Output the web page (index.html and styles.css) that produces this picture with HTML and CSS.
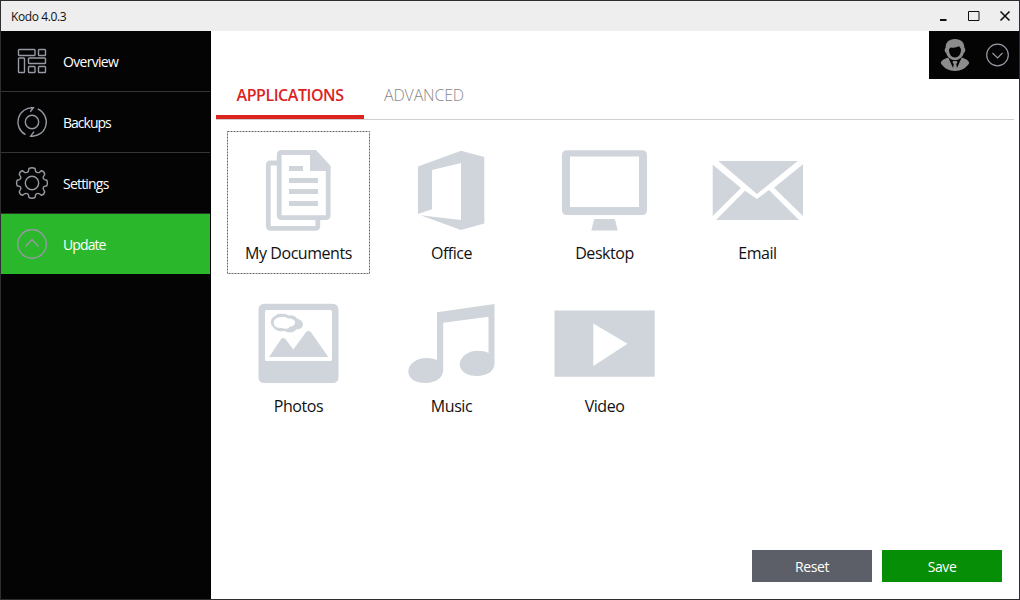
FILE: index.html
```html
<!DOCTYPE html>
<html lang="en">
<head>
<meta charset="utf-8">
<title>Kodo 4.0.3</title>
<link rel="stylesheet" href="styles.css">
</head>
<body>
<div class="window">
  <header class="titlebar">
    <span class="title">Kodo 4.0.3</span>
    <svg class="controls" width="90" height="30" viewBox="929 1 90 30">
      <path class="ctl" d="M940 20h6.500" stroke-width="2"/>
      <path class="ctl" d="M968.500 11.500h10.500v9h-10.500z"/>
      <path class="ctl" d="M1000.500 11.500l9 9M1009.500 11.500l-9 9" stroke-width="1.600"/>
    </svg>
  </header>
  <div class="body">
    <nav class="sidebar">
      <a class="item"><svg class="nav-icon" viewBox="15 45 34 34"><g class="line"><rect x="18.500" y="49.500" width="16.500" height="6" rx=".8"/><rect x="38.500" y="49.500" width="7" height="6" rx=".8"/><rect x="18.500" y="58" width="6" height="14.500" rx=".8"/><rect x="28.500" y="58" width="17" height="5.500" rx=".8"/><rect x="28.500" y="66.500" width="6.500" height="6" rx=".8"/><rect x="38.500" y="66.500" width="7" height="6" rx=".8"/></g></svg><span>Overview</span></a>
      <a class="item backups"><svg class="nav-icon" viewBox="15 106 34 34"><g class="line"><circle cx="32" cy="122" r="6.700"/><path d="M25.500 134.700A14.300 14.300 0 0 1 33.300 107.800L30.300 111.700M37.800 108.900A14.300 14.300 0 0 1 30.700 136.200L34 131.700M33.300 107.800H30.500M30.700 136.200H33.500"/></g></svg><span>Backups</span></a>
      <a class="item settings"><svg class="nav-icon" viewBox="15 167 34 34"><g class="line"><circle cx="32" cy="183" r="6.700"/><path d="M29 168.500Q32 167 35 168.500L35.700 171.500Q37.300 173.300 39.500 172.300L41.300 170.800Q44.500 171.500 44.700 174.500L43.500 176.500Q42.500 178.600 44.500 179.700L46.800 180.200Q48 183 46.800 185.800L44.500 186.400Q42.500 187.400 43.500 189.500L44.700 191.600Q44.500 194.500 41.300 195.300L39.500 193.800Q37.300 192.700 35.700 194.500L35 197.500Q32 199 29 197.500L28.300 194.500Q26.700 192.700 24.500 193.800L22.700 195.300Q19.500 194.500 19.300 191.600L20.500 189.500Q21.500 187.400 19.500 186.400L17.200 185.800Q16 183 17.200 180.200L19.500 179.700Q21.500 178.600 20.500 176.500L19.300 174.500Q19.500 171.500 22.700 170.800L24.500 172.300Q26.700 173.300 28.300 171.500Z"/></g></svg><span>Settings</span></a>
      <a class="item active"><svg class="nav-icon" viewBox="15 228 34 34"><g class="line"><circle cx="32" cy="244" r="14.300"/><path d="M25.500 246.500l6.500-7 6.500 7"/></g></svg><span>Update</span></a>
    </nav>
    <main class="content">
      <div class="account">
        <svg width="90" height="48" viewBox="929 31 90 48">
          <path fill="#8c8c8c" fill-rule="evenodd" d="M955 39c6.300 0 9.500 3.500 9.400 9 1.300.4 1.200 4.400-.5 4.800-1.300 4.800-5 7.400-8.900 7.400s-7.600-2.600-8.900-7.400c-1.700-.4-1.800-4.400-.5-4.800-.1-5.500 3.100-9 9.400-9zM949 49.500c0 5 2.700 8 6 8s6-3 6-8c-.4-2-1.500-2.600-2-3.300-2.300 1.200-5.300 1.800-7.800 1.200-1 .3-1.800.9-2.200 2.100z"/>
          <path fill="#8c8c8c" d="M948.300 57.500l4.700 10.500.8-4-1.300-1.500.7-1.500h3.600l.7 1.500-1.300 1.500.8 4 4.700-10.500c3.700 1.300 6.700 2.400 7.600 5.500-2.700 5-8.600 8-14.300 8s-11.600-3-14.300-8c.9-3.100 3.900-4.200 7.600-5.500z"/>
          <g class="line"><circle cx="997.500" cy="55" r="10.800"/><path d="M992.500 53l5 5 5-5"/></g>
        </svg>
      </div>
      <div class="tabs"><a class="tab current"><span>APPLICATIONS</span></a><a class="tab second"><span>ADVANCED</span></a></div>
      <div class="grid">
        <div class="tile"><svg viewBox="227 131 143 111"><rect class="focus" x="227.500" y="131.500" width="142" height="142"/><path d="M278.500 163H270.500Q268.300 163 268.300 165.500V226Q268.300 228.400 271 228.400H315.500Q317.800 228.400 317.800 226V219" class="thick"/><path d="M311 152.500H282Q279.200 152.500 279.200 155V215Q279.200 217.600 282 217.600H325.500Q328.200 217.600 328.200 215V170" class="thick"/><path d="M310 150H316L330.700 166V171H310zM289 166h14v5h-14zM289 178h29v5h-29zM289 189h29v5h-29zM289 201h29v5h-29z"/></svg><span>My Documents</span></div>
        <div class="tile"><svg viewBox="380 131 143 111"><path d="M418 166.500L461 150.700 484.300 157V223.500L461 230 420.500 215.300 461 220V163L432 170V209.300L418 214z"/></svg><span>Office</span></div>
        <div class="tile"><svg viewBox="533 131 143 111"><path fill-rule="evenodd" d="M567 150.300H642Q647 150.300 647 155.300V210Q647 215 642 215H567Q562 215 562 210V155.300Q562 150.300 567 150.300zM570 156.500V207H639V156.500zM595 219H614Q615 219 615.300 220.500L617.700 230.500H591.300L593.800 220.500Q594 219 595 219z"/></svg><span>Desktop</span></div>
        <div class="tile"><svg viewBox="686 131 143 111"><path d="M718.300 161H797.700L757 194zM712.700 164.700L741 188 712.700 216zM803 164.300L774 187.700 803 216zM716 220L745 190.700 757 199 769 190 799 220z"/></svg><span>Email</span></div>
        <div class="tile"><svg viewBox="227 284 143 111"><path fill-rule="evenodd" d="M264.500 303.700H332.500Q338.500 303.700 338.500 309.700V377Q338.500 383 332.500 383H264.500Q258.500 383 258.500 377V309.700Q258.500 303.700 264.500 303.700zM266.500 310Q265 310 265 311.500V359.500Q265 361 266.500 361H330.500Q332 361 332 359.500V311.500Q332 310 330.500 310z"/><path d="M269 357L281.500 338.500Q283.300 337.500 285 338.500L293.300 349.500 306.500 331.500Q308.500 330.500 310.500 331.500L328.300 357z"/><path fill-rule="evenodd" d="M275 316Q277 313.500 281 313.700Q286 313.500 289 315.500Q294 314.500 297 318.500Q302.500 320 303 324Q303 329 296.500 329.500Q292 334.500 284 331Q276 332 273.500 327.500Q270.700 325.500 270.700 322Q271 317.500 275 316zM278 317.500Q273.700 319 273.700 323Q274 328 281.500 328Q288 330 290 326.800Q296 325.500 295 321.500Q293 318 288.500 318.500Q284 315.500 278 317.500z"/></svg><span>Photos</span></div>
        <div class="tile"><svg viewBox="380 284 143 111"><path d="M437 312.300L494.500 304V364C494.500 371 487 376 477 376C467.500 376 459.800 371.500 459.800 364.500C459.800 357 468 350.700 477.500 350.700C482 350.700 486 351.500 488.500 353V316.700L443.200 322.700V370C443.200 378 435 383 425.500 383C415.500 383 408.300 378.500 408.300 371.500C408.300 364 416.500 358 426.500 358C430.500 358 434.500 358.700 437 360z"/></svg><span>Music</span></div>
        <div class="tile"><svg viewBox="533 284 143 111"><path fill-rule="evenodd" d="M554.500 310.500H654.700V376.700H554.500zM593.300 323.500V366L627.500 343.800z"/></svg><span>Video</span></div>
      </div>
      <div class="actions"><button class="btn reset">Reset</button><button class="btn save">Save</button></div>
    </main>
  </div>
</div>
</body>
</html>
```
FILE: styles.css
```css
* { box-sizing: border-box; }
body { margin: 0; font-family: "Open Sans", "Noto Sans", sans-serif; }
svg { display: block; flex: none; }
.window { width: 1020px; height: 600px; border: 1px solid #2f2d31; background: #fff; display: flex; flex-direction: column; overflow: hidden; }
.titlebar { height: 30px; flex: none; background: #eee; display: flex; align-items: center; justify-content: space-between; padding-left: 10px; }
.title { font-size: 12px; letter-spacing: -.4px; color: #111; }
.ctl { fill: none; stroke: #111; }
.body { flex: 1; display: flex; min-height: 0; }
.sidebar { width: 210px; background: #040404; border-right: 1px solid #000; }
.item { height: 61px; border-bottom: 1px solid #353535; display: flex; align-items: center; padding: 1px 0 0 14px; gap: 14px; color: #fff; font-size: 14px; letter-spacing: -.7px; }
.backups { letter-spacing: -1px; }
.settings { letter-spacing: -.8px; border-bottom-color: #263b26; }
.item.active { height: 60px; background: #2bb72b; border: 0; letter-spacing: -.9px; }
.nav-icon { width: 34px; height: 34px; }
.line { fill: none; stroke: #9699a3; stroke-width: 1.2; }
.nav-icon .line { stroke-width: 1.4; }
.content { flex: 1; display: flex; flex-direction: column; }
.account { align-self: flex-end; width: 90px; height: 48px; background: #040404; }
.tabs { height: 41px; margin: 0 5px; border-bottom: 1px solid #cfcfcf; display: flex; }
.tab { height: 40px; font-size: 16px; line-height: 33px; text-align: center; color: #888; font-weight: 300; letter-spacing: -.2px; }
.current { width: 148px; border-bottom: 4px solid #dc241f; color: #dc241f; font-weight: 600; letter-spacing: -.45px; }
.second { width: 120px; }
.grid { display: grid; grid-template-columns: repeat(4, 143px); grid-auto-rows: 143px; gap: 10px; padding: 11px 16px; }
.tile { display: flex; flex-direction: column; align-items: center; font-size: 16px; letter-spacing: -.45px; line-height: 22px; color: #111; }
.tile svg { width: 143px; height: 111px; fill: #d0d5dc; overflow: visible; }
.thick { fill: none; stroke: #d0d5dc; stroke-width: 4.8; }
.focus { fill: none; stroke: #666; stroke-width: 1; stroke-dasharray: 2 1; }
.actions { margin-top: auto; display: flex; justify-content: flex-end; gap: 10px; padding: 0 17px 17px 0; }
.btn { width: 120px; height: 32px; border: 0; padding: 0; color: #fff; font: 14px "Open Sans", sans-serif; letter-spacing: -.4px; }
.reset { background: #5c5f67; }
.save { background: #078e07; }
```
